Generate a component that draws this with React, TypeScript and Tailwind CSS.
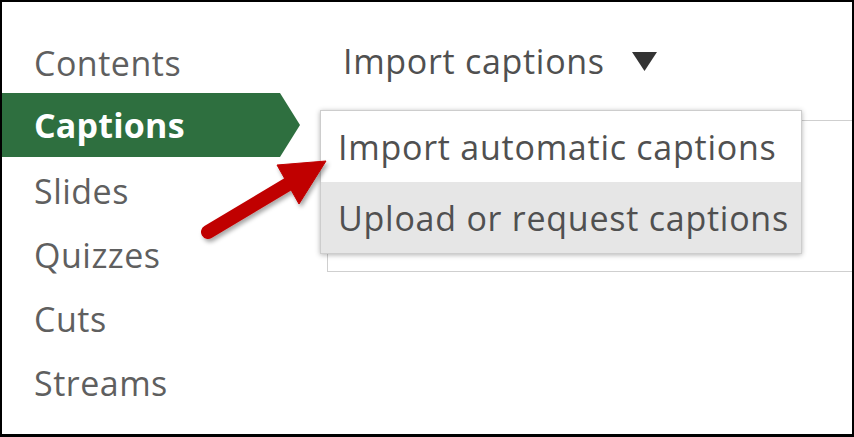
import React from "react";

const font = { fontFamily: '"Open Sans", "Noto Sans", sans-serif' };

const items = ["Contents", "Captions", "Slides", "Quizzes", "Cuts", "Streams"];

function Sidebar() {
  return (
    <div className="w-[298px] shrink-0 pt-[29px]">
      {items.map((label) =>
        label === "Captions" ? (
          <div
            key={label}
            className="h-16 -mt-[2px] mb-[2px] flex items-center pl-[32px] bg-[#2e6f3f] text-white font-bold text-[34px] tracking-[0.2px] leading-none [clip-path:polygon(0_0,calc(100%-20px)_0,100%_50%,calc(100%-20px)_100%,0_100%)]"
          >
            {label}
          </div>
        ) : (
          <div key={label} className="h-16 flex items-center pl-[32px] text-[#5f5f5f] text-[34px] tracking-[0.5px] leading-none">
            {label}
          </div>
        )
      )}
    </div>
  );
}

function Arrow() {
  return (
    <svg className="absolute inset-0 pointer-events-none" width="850" height="432" viewBox="0 0 850 432">
      <defs>
        <filter id="sh" x="-20%" y="-20%" width="140%" height="140%">
          <feDropShadow dx="2" dy="3" stdDeviation="2" floodColor="#000" floodOpacity="0.35" />
        </filter>
      </defs>
      <g filter="url(#sh)" fill="#c00000" stroke="#c00000">
        <line x1="206" y1="230" x2="288" y2="181" strokeWidth="14" strokeLinecap="round" />
        <polygon points="324,159 275,163 297,202" strokeWidth="1" strokeLinejoin="round" />
      </g>
    </svg>
  );
}

export default function App() {
  return (
    <div
      style={font}
      className="relative w-[854px] h-[437px] bg-white border-black border-l-2 border-t-2 border-r-2 border-b-[3px] flex overflow-hidden"
    >
      <Sidebar />
      <div className="relative flex-1">
        <div className="h-[118px] flex items-center pl-[43px] text-[#505050] text-[34px] tracking-[0.7px] leading-none">
          <span>Import captions</span>
          <svg className="ml-[27px]" width="25" height="19" viewBox="0 0 25 19">
            <polygon points="0,0 25,0 12.5,19" fill="#333" />
          </svg>
        </div>
        <div className="ml-[27px] h-[152px] border-y border-l border-[#cfcfcf]" />
        <div className="absolute left-[20px] top-[108px] w-[482px] bg-white border border-[#cdcdcd] shadow-[0_1px_5px_rgba(0,0,0,0.3)] text-[#505050] text-[34px] tracking-[0.75px] leading-none">
          <div className="h-[71px] flex items-center pl-[17px]">Import automatic captions</div>
          <div className="h-[71px] flex items-center pl-[17px] bg-[#e6e6e6]">Upload or request captions</div>
        </div>
      </div>
      <Arrow />
    </div>
  );
}
